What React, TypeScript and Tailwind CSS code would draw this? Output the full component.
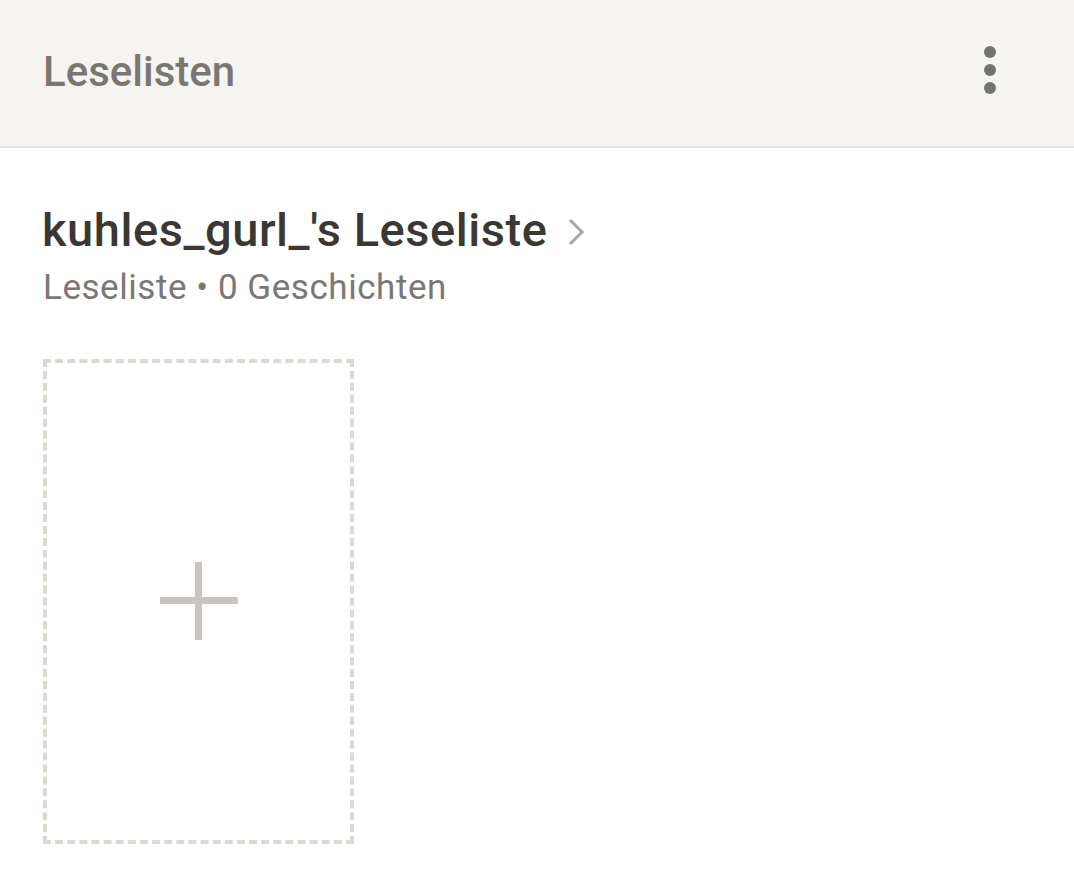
export default function App() {
  return (
    <div className="w-[1074px] h-[873px] bg-white overflow-hidden" style={{ fontFamily: 'Roboto, "Noto Sans", sans-serif' }}>
      <header className="h-[148px] bg-[#f5f4f0] border-b-2 border-[#e4e2de] flex items-center justify-between pl-[43px] pr-[78px]">
        <h1 className="text-[42px] font-medium text-[#7a7773] leading-none -mt-[2px]">Leselisten</h1>
        <div className="flex flex-col gap-[6px] -mt-[6px]">
          <span className="block w-[12px] h-[12px] rounded-full bg-[#737373]" />
          <span className="block w-[12px] h-[12px] rounded-full bg-[#737373]" />
          <span className="block w-[12px] h-[12px] rounded-full bg-[#737373]" />
        </div>
      </header>
      <main className="pl-[42px] pt-[58px]">
        <div className="flex items-center gap-[20px]">
          <h2 className="text-[47px] tracking-[0.55px] font-medium text-[#3a3833] leading-none">kuhles_gurl_'s Leseliste</h2>
          <svg width="18" height="30" viewBox="0 0 18 30" className="mt-[4px]">
            <path d="M3 3 L15 15 L3 27" fill="none" stroke="#a9a7a4" strokeWidth="3" />
          </svg>
        </div>
        <p className="text-[35px] tracking-[0.55px] text-[#7b7873] leading-none mt-[17px] pl-[1px]">Leseliste • 0 Geschichten</p>
        <div className="mt-[54px] ml-[1px] w-[311px] h-[485px] border-[4px] border-dashed border-[#ddd8d0] flex items-center justify-center">
          <svg width="78" height="78" viewBox="0 0 78 78" className="-mt-[2px]">
            <rect x="35" y="0" width="7" height="78" fill="#c9c4bf" />
            <rect x="0" y="35" width="78" height="7" fill="#c9c4bf" />
          </svg>
        </div>
      </main>
    </div>
  );
}
